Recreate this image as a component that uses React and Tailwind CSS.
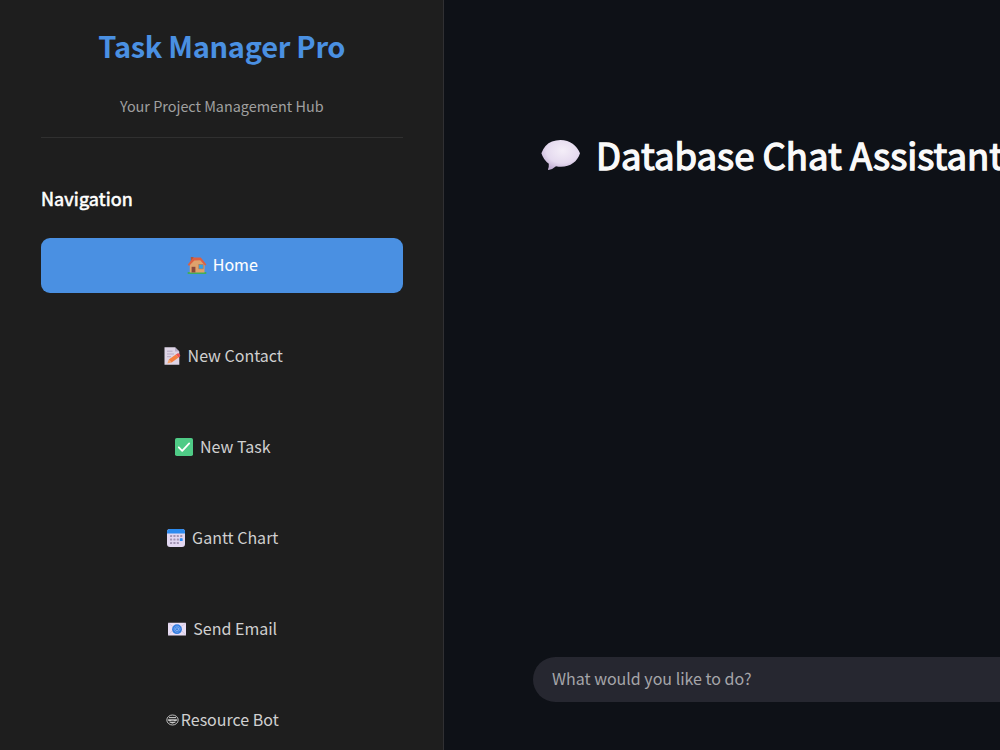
import React from 'react';

function HouseIcon() {
  return (
    <svg className="h-[20px] w-[20px] shrink-0" viewBox="0 0 20 20">
      <rect x="0.5" y="17" width="19" height="1.9" rx="0.9" fill="#3fae5c" />
      <rect x="3.8" y="2" width="2.8" height="5" fill="#b0563f" />
      <path d="M2.800 9.500 7.500 4H13l4.500 5.500V17.400H2.800Z" fill="#dfa26c" />
      <path d="M4.600 11.800h3.800v5.600h-3.800z" fill="#8a4a3c" />
      <rect x="11.800" y="9.300" width="4.400" height="4.600" fill="#2fa3e8" stroke="#b7774f" strokeWidth=".6" />
      <path d="M.8 9.600 6.500 2.600h7.300l5.600 6.900-1.200 1.200-5-5.500-5.900.2L2 10.900Z" fill="#dc6042" />
    </svg>
  );
}

function MemoIcon() {
  return (
    <svg className="h-[20px] w-[20px] shrink-0" viewBox="0 0 20 20">
      <path d="M2.500 1.200h10.500l4.300 4.300V18.800H2.500Z" fill="#ded5e6" />
      <path d="M13 1.200v4.300h4.300Z" fill="#b9aec9" />
      <path d="M5 5.200h5.500M5 8h7M5 10.700h4" stroke="#b6a9c3" strokeWidth="1" />
      <path d="M5.300 17.500 6.800 13.500l2.800 2.900Z" fill="#f7a66d" />
      <path d="m6.800 13.500 7-5 2.800 3.100-7 4.800Z" fill="#f5803f" />
      <path d="m13.800 8.500 1.600-1.100q1.300-.5 2.300.8 1 1.300.3 2.300l-1.400 1.100Z" fill="#ec5355" />
    </svg>
  );
}

function CheckIcon() {
  return (
    <svg className="h-[20px] w-[20px] shrink-0" viewBox="0 0 20 20">
      <rect x="1" y="1" width="18" height="18" rx="1.8" fill="#4fcb86" />
      <path d="m4.800 10.300 3.400 3.500 7-7.400" fill="none" stroke="#fff" strokeWidth="1.800" strokeLinecap="round" strokeLinejoin="round" />
    </svg>
  );
}

function CalendarIcon() {
  return (
    <svg className="h-[20px] w-[20px] shrink-0" viewBox="0 0 20 20">
      <rect x="1" y="1" width="18" height="18" rx="3" fill="#e2d7f1" />
      <path d="M1 5.400V4a3 3 0 0 1 3-3h12a3 3 0 0 1 3 3v1.400Z" fill="#2c8bef" />
      <g fill="#a294b3">
        {[7, 10.500, 14].map((y) =>
          [4, 7.400, 10.800, 14.200].map((x) =>
            x === 14.2 && y === 14 ? null : <rect key={x + '-' + y} x={x} y={y} width="2.100" height="2.100" rx=".4" />
          )
        )}
      </g>
      <rect x="13.800" y="10.200" width="2.800" height="2.800" rx=".5" fill="#258fff" />
    </svg>
  );
}

function EmailIcon() {
  return (
    <svg className="h-[20px] w-[20px] shrink-0" viewBox="0 0 20 20">
      <rect x="1" y="3.800" width="18" height="12.800" rx=".6" fill="#e9def4" />
      <path d="m1.300 4.200 8.700 6.300 8.700-6.300M1.300 16 7 10M18.700 16 13 10" fill="none" stroke="#c9bada" strokeWidth=".7" />
      <circle cx="10" cy="10.200" r="4.900" fill="#347ee0" />
      <circle cx="10" cy="10.200" r="1.500" fill="none" stroke="#9dbdf3" strokeWidth=".7" />
      <path d="M11.600 8.700v2q.1 1 .8.900.8-.2.700-1.600A3 3 0 1 0 11.600 12.800" fill="none" stroke="#9dbdf3" strokeWidth=".55" />
    </svg>
  );
}

function BotIcon() {
  return (
    <svg className="h-[12px] w-[13px] shrink-0" viewBox="0 0 13 12" fill="none" stroke="#d0d0d0">
      <ellipse cx="6.500" cy="6" rx="5.700" ry="5" strokeWidth=".9" />
      <path d="M3 3.600h7" strokeWidth="1" />
      <path d="M2.200 5.400h8.600v1q-1.800 1-3.500 0h-1.600q-1.700 1-3.500 0Z" fill="#c0c0c0" strokeWidth=".5" />
      <path d="M3.600 8.100q2.900 2.200 5.800 0Z" fill="#d0d0d0" strokeWidth=".6" />
    </svg>
  );
}

function SpeechIcon() {
  return (
    <svg className="h-[32px] w-[40px] shrink-0" viewBox="0 0 40 32">
      <defs>
        <radialGradient id="bubble" cx=".55" cy=".35" r=".65">
          <stop offset="0" stopColor="#f4eef8" />
          <stop offset=".65" stopColor="#e5daef" />
          <stop offset="1" stopColor="#c2afd3" />
        </radialGradient>
      </defs>
      <path d="M20.500 1C30 1 37 6.500 40 14.300 37.500 22.500 30.500 27.800 21 27.800q-2.500 0-5-.5-3.500 3.300-7.500 3.700-.7-.2-.4-1 .9-2.300.7-5.200Q3.500 21 1.400 14.300 4.500 5.500 12 2.500 16 1 20.500 1Z" fill="url(#bubble)" />
    </svg>
  );
}

const items = [
  { label: 'Home', Icon: HouseIcon, gap: 'gap-[6px]', active: true },
  { label: 'New Contact', Icon: MemoIcon, gap: 'gap-[6px]' },
  { label: 'New Task', Icon: CheckIcon, gap: 'gap-[6px]' },
  { label: 'Gantt Chart', Icon: CalendarIcon, gap: 'gap-[6px]' },
  { label: 'Send Email', Icon: EmailIcon, gap: 'gap-[6px]' },
  { label: 'Resource Bot', Icon: BotIcon, gap: 'gap-[2px]' },
];

export default function App() {
  return (
    <div className="flex h-[750px] w-full overflow-hidden bg-[#0e1117] font-['Noto_Sans_CJK_SC',sans-serif] whitespace-nowrap">
      <aside className="flex w-[444px] shrink-0 flex-col border-r border-[#303033] bg-[#1e1e1e] pl-[41px] pr-[40.500px]">
        <h1 className="mt-[21px] h-[48px] text-center text-[29px] leading-[48px] font-bold tracking-[-0.300px] text-[#4a90e2]">Task Manager Pro</h1>
        <p className="mt-[23px] h-[28px] text-center text-[14.400px] leading-[28px] text-[#a0a0a0]">Your Project Management Hub</p>
        <hr className="mt-[17px] border-t border-[#303030]" />
        <h2 className="mt-[44px] h-[32px] text-[18px] leading-[32px] font-normal tracking-[0.1px] text-white [-webkit-text-stroke:0.6px_white]">Navigation</h2>
        <nav className="mt-[24px] flex flex-col gap-[36px]">
          {items.map(({ label, Icon, gap, active }) => (
            <a
              key={label}
              className={`flex h-[55px] shrink-0 items-center justify-center rounded-[9px] pb-[2px] pl-[1px] text-[16px] leading-[27px] ${gap} ${active ? 'bg-[#4a90e2] text-white [-webkit-text-stroke:0.1px_white]' : 'text-[#d0d0d0]'}`}
            >
              <Icon />
              <span>{label}</span>
            </a>
          ))}
        </nav>
      </aside>
      <main className="flex min-w-0 flex-1 flex-col overflow-hidden pl-[89px]">
        <header className="mt-[127px] flex h-[56px] items-center gap-[16px] pl-[7px]">
          <SpeechIcon />
          <h1 className="text-[36.500px] leading-[56px] font-normal text-[#fafafa] [-webkit-text-stroke:1.300px_#fafafa]">Database Chat Assistant</h1>
        </header>
        <div className="mt-auto mb-[48px] flex h-[45px] shrink-0 items-center rounded-l-full bg-[#262730] pb-[4px] pl-[19px] text-[16px] text-[#a5a5a9]">
          What would you like to do?
        </div>
      </main>
    </div>
  );
}
